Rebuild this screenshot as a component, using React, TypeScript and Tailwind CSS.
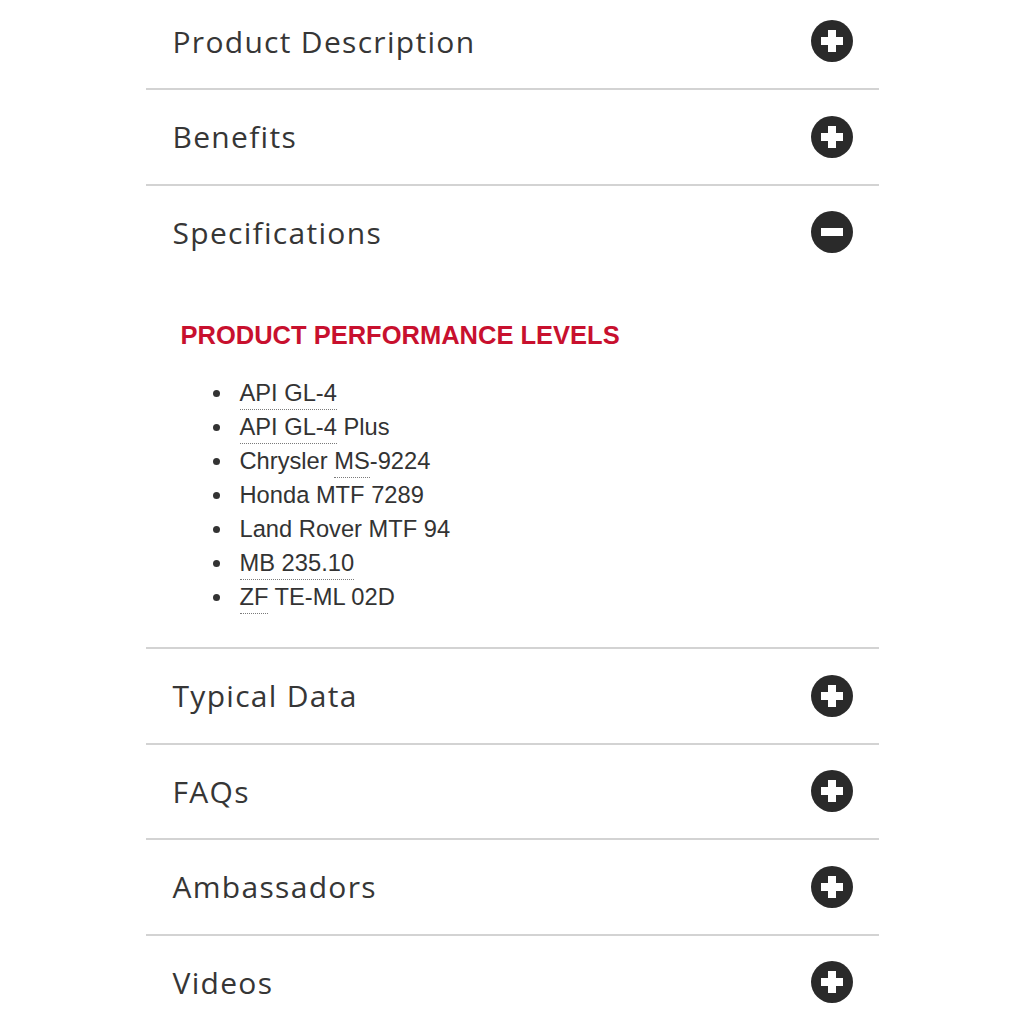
import { ReactNode } from "react";

const secoes = ["Product Description", "Benefits", "Specifications", "Typical Data", "FAQs", "Ambassadors", "Videos"];

function IconeCirculo({ aberto }: { aberto: boolean }) {
  return (
    <svg width="42" height="42" viewBox="0 0 42 42" aria-hidden="true">
      <circle cx="21" cy="21" r="21" fill="#2a2a2a" />
      {aberto ? (
        <rect x="10" y="17" width="22" height="8" fill="#fff" />
      ) : (
        <path d="M17 10h8v7h7v8h-7v7h-8v-7h-7v-8h7z" fill="#fff" />
      )}
    </svg>
  );
}

function Abrev({ children }: { children: ReactNode }) {
  return <span className="border-b border-dotted border-[#7a7a7a] pb-[3px]">{children}</span>;
}

const niveis: ReactNode[] = [
  <Abrev>API GL-4</Abrev>,
  <><Abrev>API GL-4</Abrev> Plus</>,
  <>Chrysler <Abrev>MS</Abrev>-9224</>,
  <>Honda MTF 7289</>,
  <>Land Rover MTF 94</>,
  <Abrev>MB 235.10</Abrev>,
  <><Abrev>ZF</Abrev> TE-ML 02D</>,
];

export default function App() {
  return (
    <div className="min-h-screen bg-white overflow-hidden">
      <div className="mx-auto w-[733px] -mt-[5.5px]">
        {secoes.map((titulo) => {
          const aberto = titulo === "Specifications";
          return (
            <div key={titulo} className="border-b-2 border-[#d3d3d3]">
              <div className="flex h-[93.5px] items-center justify-between pl-[27px] pr-[26px]">
                <span
                  className="text-[30px] text-[#363636] tracking-[1.3px]"
                  style={{ fontFamily: '"Open Sans", sans-serif' }}
                >
                  {titulo}
                </span>
                <IconeCirculo aberto={aberto} />
              </div>
              {aberto && (
                <div className="pl-[35px] pt-[41px] pb-[33px]" style={{ fontFamily: '"Liberation Sans", Arial, sans-serif' }}>
                  <h3 className="text-[25.5px] font-bold leading-[30px] text-[#c8102e]">PRODUCT PERFORMANCE LEVELS</h3>
                  <ul className="mt-[26px] list-disc pl-[53px] text-[23.7px] leading-[34px] text-[#333]">
                    {niveis.map((n, i) => (
                      <li key={i} className="pl-[6px]">{n}</li>
                    ))}
                  </ul>
                </div>
              )}
            </div>
          );
        })}
      </div>
    </div>
  );
}
